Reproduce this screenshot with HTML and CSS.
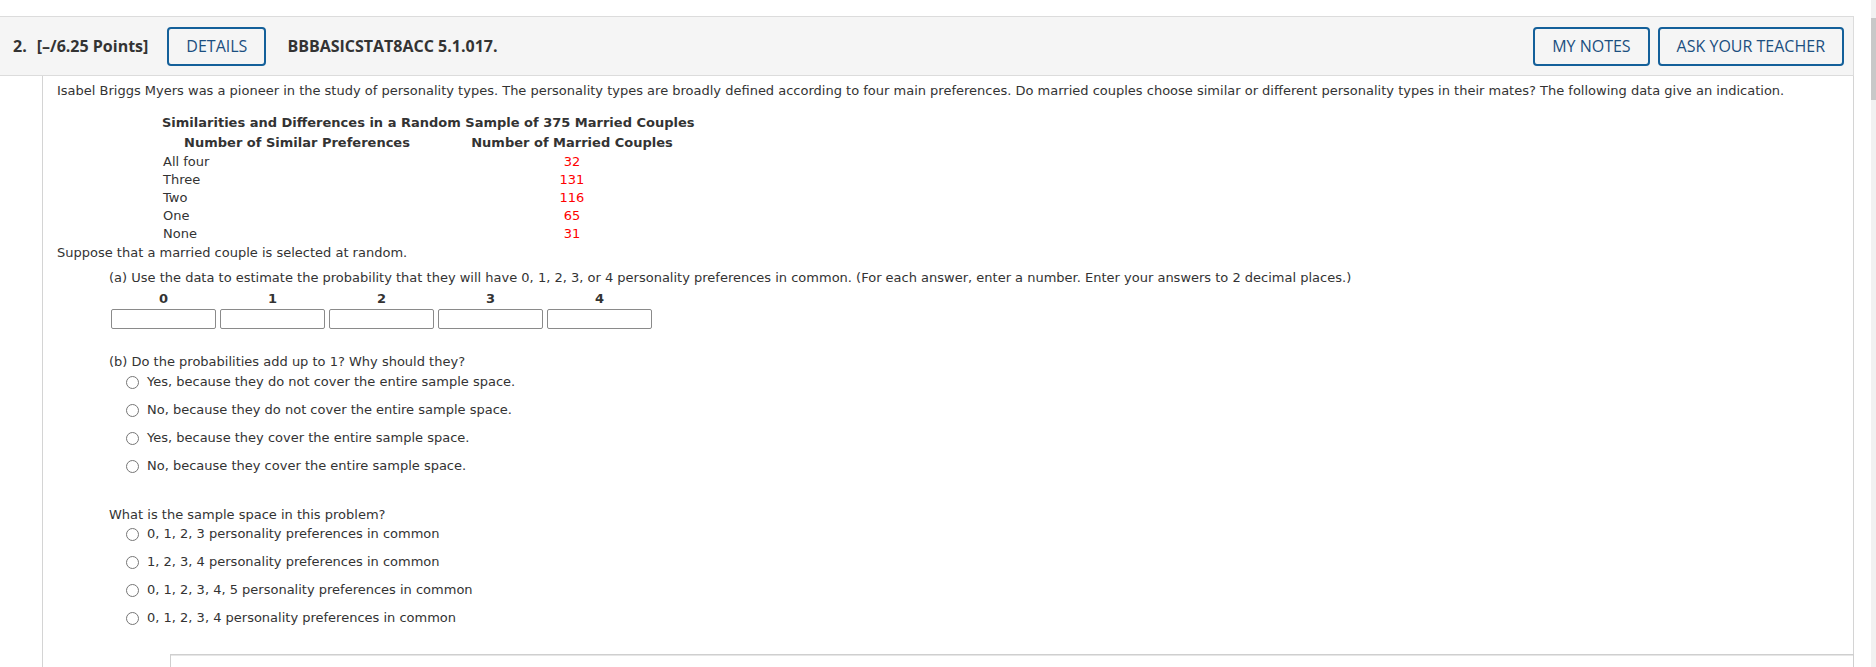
FILE: index.html
```html
<!DOCTYPE html>
<html lang="en">
<head>
<meta charset="utf-8">
<title>Question 2</title>
<link rel="stylesheet" href="styles.css">
</head>
<body>
<div class="page">
  <header class="qhead">
    <span class="qnum">2.</span>
    <span class="qpts">[–/6.25 Points]</span>
    <button class="btn">DETAILS</button>
    <span class="qid">BBBASICSTAT8ACC 5.1.017.</span>
    <span class="spacer"></span>
    <button class="btn">MY NOTES</button>
    <button class="btn btn-ask">ASK YOUR TEACHER</button>
  </header>
  <div class="qbody">
    <div class="qmain">
      <p class="intro">Isabel Briggs Myers was a pioneer in the study of personality types. The personality types are broadly defined according to four main preferences. Do married couples choose similar or different personality types in their mates? The following data give an indication.</p>
      <table class="data">
        <tr class="title-row"><th colspan="2">Similarities and Differences in a Random Sample of 375 Married Couples</th></tr>
        <tr class="head-row"><th class="c1">Number of Similar Preferences</th><th class="c2">Number of Married Couples</th></tr>
        <tr><td class="c1">All four</td><td class="c2 num">32</td></tr>
        <tr><td class="c1">Three</td><td class="c2 num">131</td></tr>
        <tr><td class="c1">Two</td><td class="c2 num">116</td></tr>
        <tr><td class="c1">One</td><td class="c2 num">65</td></tr>
        <tr><td class="c1">None</td><td class="c2 num">31</td></tr>
      </table>
      <p class="lead">Suppose that a married couple is selected at random.</p>
      <div class="part">
        <p class="part-a">(a) Use the data to estimate the probability that they will have 0, 1, 2, 3, or 4 personality preferences in common. (For each answer, enter a number. Enter your answers to 2 decimal places.)</p>
        <div class="answer-grid">
          <label class="cell"><span class="cell-label">0</span><input type="text" class="ans"></label>
          <label class="cell"><span class="cell-label">1</span><input type="text" class="ans"></label>
          <label class="cell"><span class="cell-label">2</span><input type="text" class="ans"></label>
          <label class="cell"><span class="cell-label">3</span><input type="text" class="ans"></label>
          <label class="cell"><span class="cell-label">4</span><input type="text" class="ans"></label>
        </div>
        <p class="part-b">(b) Do the probabilities add up to 1? Why should they?</p>
        <ul class="choices choices-b">
          <li><label><input type="radio" name="b" class="radio"><span>Yes, because they do not cover the entire sample space.</span></label></li>
          <li><label><input type="radio" name="b" class="radio"><span>No, because they do not cover the entire sample space.</span></label></li>
          <li><label><input type="radio" name="b" class="radio"><span>Yes, because they cover the entire sample space.</span></label></li>
          <li><label><input type="radio" name="b" class="radio"><span>No, because they cover the entire sample space.</span></label></li>
        </ul>
        <p class="part-q2">What is the sample space in this problem?</p>
        <ul class="choices choices-q2">
          <li><label><input type="radio" name="s" class="radio"><span>0, 1, 2, 3 personality preferences in common</span></label></li>
          <li><label><input type="radio" name="s" class="radio"><span>1, 2, 3, 4 personality preferences in common</span></label></li>
          <li><label><input type="radio" name="s" class="radio"><span>0, 1, 2, 3, 4, 5 personality preferences in common</span></label></li>
          <li><label><input type="radio" name="s" class="radio"><span>0, 1, 2, 3, 4 personality preferences in common</span></label></li>
        </ul>
      </div>
    </div>
    <div class="qfoot"></div>
  </div>
</div>
<div class="scrollbar"><div class="thumb"></div></div>
</body>
</html>
```
FILE: styles.css
```css
html, body {
  margin: 0;
  padding: 0;
  background: #fff;
}
body {
  font-family: "DejaVu Sans", Verdana, sans-serif;
  font-size: 13px;
  line-height: 18px;
  color: #333;
  overflow: hidden;
}
p {
  margin: 0;
}
.page {
  width: 1854px;
  padding-top: 16px;
}

/* header bar */
.qhead {
  display: flex;
  align-items: center;
  height: 58px;
  background: #f5f5f5;
  border: 1px solid #dcdcdc;
  border-left: 0;
  padding: 0 9px 0 13px;
  font-family: "Open Sans", sans-serif;
  color: #333;
}
.qnum, .qpts, .qid {
  font-weight: 700;
  font-size: 16px;
  line-height: 22px;
}
.qnum { margin-right: 10px; }
.qpts { margin-right: 19px; }
.qid { margin-left: 21px; }
.spacer { flex: 1; }
.btn {
  box-sizing: border-box;
  height: 39px;
  padding: 0 17px;
  border: 2px solid #14609a;
  border-radius: 4px;
  background: transparent;
  color: #1b4f80;
  font-family: "Open Sans", sans-serif;
  font-size: 16px;
  font-weight: 400;
  line-height: 35px;
}
.btn-ask { margin-left: 8px; }

/* question body */
.qbody {
  margin-left: 42px;
  border-left: 1px solid #d4d4d4;
}
.qmain {
  border-right: 1px solid #d4d4d4;
  padding: 6px 0 27px 14px;
}
.qfoot {
  margin-left: 127px;
  height: 30px;
  border-top: 1px solid #cfcfcf;
  border-left: 1px solid #cfcfcf;
  border-right: 1px solid #cfcfcf;
  box-shadow: inset 0 1px 0 #e6e6e6;
}

/* data table */
.data {
  margin: 13px 0 0 105px;
  border-collapse: collapse;
  border-spacing: 0;
}
.data th, .data td {
  padding: 0;
  white-space: nowrap;
}
.data th { font-weight: 700; }
.title-row th {
  text-align: left;
  height: 20px;
}
.head-row th { height: 20px; }
.data td { height: 18px; }
.data .c1 { width: 269px; }
.data td.c1 { text-align: left; padding-left: 1px; }
.data .c2 { width: 280px; text-align: center; }
.num { color: #ff0000; }

.lead { margin-top: 1px; }

/* parts */
.part { margin-left: 52px; }
.part-a { margin-top: 7px; }
.answer-grid {
  display: grid;
  grid-template-columns: repeat(5, 105px);
  column-gap: 4px;
  margin: 3px 0 0 2px;
}
.cell {
  display: flex;
  flex-direction: column;
  align-items: stretch;
}
.cell-label {
  text-align: center;
  font-weight: 700;
}
.ans {
  box-sizing: border-box;
  width: 105px;
  height: 20px;
  margin: 1px 0 0;
  padding: 0 4px;
  border: 1px solid #8a8a8a;
  border-radius: 2px;
  background: #fff;
  font: inherit;
}
.part-b { margin-top: 24px; }
.part-q2 { margin-top: 31px; }

.choices {
  list-style: none;
  margin: 0;
  padding: 0 0 0 17px;
}
.choices-b { margin-top: 2px; }
.choices-q2 { margin-top: 1px; }
.choices li + li { margin-top: 10px; }
.choices label {
  display: flex;
  align-items: center;
  height: 18px;
}
.radio {
  appearance: none;
  -webkit-appearance: none;
  box-sizing: border-box;
  width: 13px;
  height: 13px;
  margin: 0 8px 0 0;
  border: 1px solid #767676;
  border-radius: 50%;
  background: #fff;
  flex: none;
}

/* window scrollbar (overlay) */
.scrollbar {
  position: fixed;
  top: 0;
  right: 0;
  width: 5px;
  height: 100%;
  background: #f1f1f1;
}
.thumb {
  margin-top: 18px;
  height: 82px;
  background: #c8c8c8;
}
```
